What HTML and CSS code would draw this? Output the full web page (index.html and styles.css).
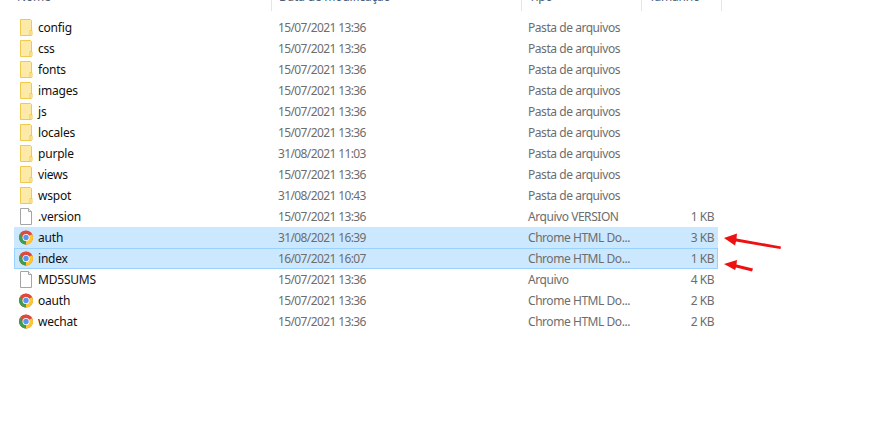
FILE: index.html
```html
<!DOCTYPE html>
<html>
	<head>
		<meta charset="UTF-8">
		<title>Explorer</title>
		<link rel="stylesheet" href="styles.css">
	</head>
	<body>
		<svg class="defs" width="0" height="0">
			<symbol id="folder" viewBox="0 0 14 17">
				<path d="M1.500 .5H11.500L12.500 1.500V16.500H1.500Z" fill="#fde9a8" stroke="#f0c94e"/>
				<path d="M11 16V11.500H13V16" fill="#fff3c9" stroke="#f0c94e"/>
			</symbol>
			<symbol id="file" viewBox="0 0 14 17">
				<path d="M1.500 .5H9.500L12.500 3.500V16.500H1.500Z" fill="#fff" stroke="#a5a5a5"/>
				<path d="M9.500 .5V3.500H12.500" fill="#eee" stroke="#a5a5a5"/>
			</symbol>
			<symbol id="chrome" viewBox="0 0 14 14">
				<circle cx="7" cy="7" r="7" fill="#dd4b3e"/>
				<path d="M7 7 13.060 3.500A7 7 0 0 1 7 14Z" fill="#fbc830"/>
				<path d="M7 7 7 14A7 7 0 0 1 .94 3.500Z" fill="#3c9c50"/>
				<path d="M7 4H13.060A7 7 0 0 0 1.500 2.600L4.400 8.500Z" fill="#dd4b3e"/>
				<circle cx="7" cy="7" r="3.500" fill="#fff"/>
				<circle cx="7" cy="7" r="2.700" fill="#5a94f2"/>
			</symbol>
		</svg>
		<div class="wrap">
			<div class="head">
				<div class="hcell first">Nome</div>
				<div class="hcell">Data de modificação</div>
				<div class="hcell">Tipo</div>
				<div class="hcell">Tamanho</div>
			</div>
			<ul class="list">
				<li><svg class="ico"><use href="#folder"/></svg><span class="name">config</span><span class="date">15/07/2021 13:36</span><span class="type">Pasta de arquivos</span><span class="size"></span></li>
				<li><svg class="ico"><use href="#folder"/></svg><span class="name">css</span><span class="date">15/07/2021 13:36</span><span class="type">Pasta de arquivos</span><span class="size"></span></li>
				<li><svg class="ico"><use href="#folder"/></svg><span class="name">fonts</span><span class="date">15/07/2021 13:36</span><span class="type">Pasta de arquivos</span><span class="size"></span></li>
				<li><svg class="ico"><use href="#folder"/></svg><span class="name">images</span><span class="date">15/07/2021 13:36</span><span class="type">Pasta de arquivos</span><span class="size"></span></li>
				<li><svg class="ico"><use href="#folder"/></svg><span class="name">js</span><span class="date">15/07/2021 13:36</span><span class="type">Pasta de arquivos</span><span class="size"></span></li>
				<li><svg class="ico"><use href="#folder"/></svg><span class="name">locales</span><span class="date">15/07/2021 13:36</span><span class="type">Pasta de arquivos</span><span class="size"></span></li>
				<li><svg class="ico"><use href="#folder"/></svg><span class="name">purple</span><span class="date">31/08/2021 11:03</span><span class="type">Pasta de arquivos</span><span class="size"></span></li>
				<li><svg class="ico"><use href="#folder"/></svg><span class="name">views</span><span class="date">15/07/2021 13:36</span><span class="type">Pasta de arquivos</span><span class="size"></span></li>
				<li><svg class="ico"><use href="#folder"/></svg><span class="name">wspot</span><span class="date">31/08/2021 10:43</span><span class="type">Pasta de arquivos</span><span class="size"></span></li>
				<li><svg class="ico"><use href="#file"/></svg><span class="name">.version</span><span class="date">15/07/2021 13:36</span><span class="type">Arquivo VERSION</span><span class="size">1 KB</span></li>
				<li class="sel"><svg class="ico"><use href="#chrome"/></svg><span class="name">auth</span><span class="date">31/08/2021 16:39</span><span class="type">Chrome HTML Do...</span><span class="size">3 KB</span></li>
				<li class="sel cur"><svg class="ico"><use href="#chrome"/></svg><span class="name">index</span><span class="date">16/07/2021 16:07</span><span class="type">Chrome HTML Do...</span><span class="size">1 KB</span></li>
				<li><svg class="ico"><use href="#file"/></svg><span class="name">MD5SUMS</span><span class="date">15/07/2021 13:36</span><span class="type">Arquivo</span><span class="size">4 KB</span></li>
				<li><svg class="ico"><use href="#chrome"/></svg><span class="name">oauth</span><span class="date">15/07/2021 13:36</span><span class="type">Chrome HTML Do...</span><span class="size">2 KB</span></li>
				<li><svg class="ico"><use href="#chrome"/></svg><span class="name">wechat</span><span class="date">15/07/2021 13:36</span><span class="type">Chrome HTML Do...</span><span class="size">2 KB</span></li>
			</ul>
			<!-- setas vermelhas por cima da lista -->
			<svg class="arrows" width="880" height="423">
				<path d="M724 238 737 233.500 736.500 238.500 781 246.500 780.500 249 736 241.500 735 245.500Z" fill="#ee1111"/>
				<path d="M724 264 737 260 736.500 264.500 753 268.500 752 271.500 736 267.500 735 270Z" fill="#ee1111"/>
			</svg>
		</div>
	</body>
</html>
```

FILE: styles.css
```css
html, body {
	margin: 0;
	padding: 0;
	background: #fff;
}
ul, li {
	margin: 0;
	padding: 0;
	list-style: none;
}
.defs {
	position: absolute;
}
.wrap {
	position: relative;
	width: 880px;
	height: 423px;
	overflow: hidden;
	font: 12px "Noto Sans", "Open Sans", sans-serif;
	letter-spacing: -0.2px;
}
.head {
	display: grid;
	grid-template-columns: 258px 250px 120px 80px;
	margin-left: 14px;
	height: 11px;
	overflow: hidden;
	color: #4c607a;
}
.hcell {
	height: 20px;
	line-height: 1;
	margin-top: -9px;
	padding-left: 7px;
	border-right: 1px solid #e5e5e5;
}
.hcell.first {
	padding-left: 3px;
}
.list {
	margin: 6px 0 0 14px;
	width: 704px;
}
.list li {
	display: grid;
	grid-template-columns: 24px 240px 250px 120px 66px;
	align-items: center;
	height: 21px;
	color: #6d6d6d;
}
.list li span {
	white-space: nowrap;
}
.ico {
	width: 14px;
	height: 17px;
	margin-left: 5px;
}
.list li .name {
	color: #101010;
}
.list li .date {
	letter-spacing: -0.62px;
}
.list li .type {
	letter-spacing: -0.45px;
}
.list li .size {
	text-align: right;
	letter-spacing: -0.5px;
}
.sel {
	background: #cce8ff;
}
.list li.cur {
	box-shadow: inset 0 0 0 1px #99d1ff;
}
.arrows {
	position: absolute;
	left: 0;
	top: 0;
}
```
